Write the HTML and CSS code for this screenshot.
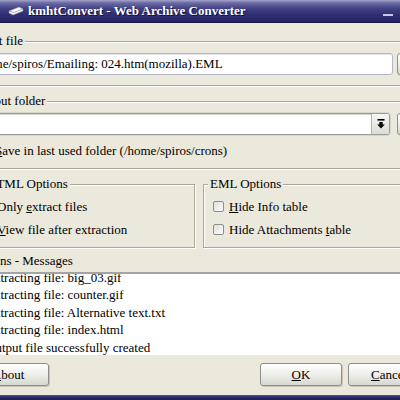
FILE: index.html
```
<!DOCTYPE html>
<html>
<head>
<meta charset="utf-8">
<title>kmhtConvert</title>
<link rel="stylesheet" href="styles.css">
</head>
<body>
<div class="window">
  <div class="titlebar">
    <svg class="app-icon" width="16" height="12" viewBox="0 0 16 12">
      <path d="M1 6 L11 2 L15 4 L15 6 L5 10 L1 8 Z" fill="#ffffff" stroke="#8a8aa8" stroke-width="0.6"/>
      <path d="M1 6 L6 7.5 L15 4" fill="none" stroke="#9a9ab4" stroke-width="0.8"/>
    </svg>
    <span class="title">kmhtConvert - Web Archive Converter</span>
    <span class="minimize"></span>
  </div>

  <div class="client">
    <fieldset class="group group-input">
      <legend class="legend legend-input">Input file</legend>
      <div class="field-row row-input">
        <div class="textfield">/home/spiros/Emailing: 024.htm(mozilla).EML</div>
        <div class="btn btn-browse"></div>
      </div>
    </fieldset>

    <fieldset class="group group-output">
      <legend class="legend legend-output">Output folder</legend>
      <div class="field-row row-output">
        <div class="combo">
          <div class="combo-edit"></div>
          <div class="combo-arrow">
            <svg width="8" height="10" viewBox="0 0 8 10">
              <rect x="0.5" y="0" width="7" height="1.6" fill="#000"/>
              <path d="M2.3 3 H5.7 V5.4 H7.8 L4 9.6 L0.2 5.4 H2.3 Z" fill="#000"/>
            </svg>
          </div>
        </div>
        <div class="btn btn-browse"></div>
      </div>
      <div class="check-row save-row">
        <span class="checkbox"></span>
        <span class="check-label"><u>S</u>ave in last used folder (/home/spiros/crons)</span>
      </div>
    </fieldset>

    <div class="options">
      <fieldset class="group group-html">
        <legend class="legend legend-html">HTML Options</legend>
        <div class="check-row opt-row">
          <span class="checkbox"></span>
          <span class="check-label">Only <u>e</u>xtract files</span>
        </div>
        <div class="check-row opt-row">
          <span class="checkbox"></span>
          <span class="check-label"><u>V</u>iew file after extraction</span>
        </div>
      </fieldset>
      <fieldset class="group group-eml">
        <legend class="legend legend-eml">EML Options</legend>
        <div class="check-row opt-row">
          <span class="checkbox"></span>
          <span class="check-label"><u>H</u>ide Info table</span>
        </div>
        <div class="check-row opt-row">
          <span class="checkbox"></span>
          <span class="check-label">Hide Attachments <u>t</u>able</span>
        </div>
      </fieldset>
    </div>

    <div class="msg-label">Actions - Messages</div>

    <div class="msg-list">
      <div class="msg-items">
        <div class="msg">Extracting file: big_03.gif</div>
        <div class="msg">Extracting file: counter.gif</div>
        <div class="msg">Extracting file: Alternative text.txt</div>
        <div class="msg">Extracting file: index.html</div>
        <div class="msg">Output file successfully created</div>
      </div>
    </div>

    <div class="button-row">
      <div class="btn btn-text btn-about"><u>A</u>bout</div>
      <div class="spacer"></div>
      <div class="btn btn-text"><u>O</u>K</div>
      <div class="btn btn-text"><u>C</u>ancel</div>
    </div>
  </div>

  <div class="bottom-frame"></div>
</div>
</body>
</html>
```

FILE: styles.css
```
html, body {
  margin: 0;
  padding: 0;
}

body {
  width: 400px;
  height: 400px;
  overflow: hidden;
  background: #ebe8dc;
  font-family: "Liberation Serif", "Times New Roman", serif;
  font-size: 13px;
  color: #000;
}

.window {
  display: flex;
  flex-direction: column;
  height: 400px;
}

/* ---------- title bar ---------- */
.titlebar {
  flex: none;
  height: 23px;
  display: flex;
  align-items: center;
  background: linear-gradient(#a4a4cc 0px, #6a6aa4 3px, #3e3e82 9px, #2c2c6e 16px, #222262 23px);
  color: #fff;
  box-sizing: border-box;
  border-bottom: 1px solid #16164a;
}

.app-icon {
  margin-left: 8px;
  flex: none;
}

.title {
  margin-left: 4px;
  font-weight: bold;
  font-size: 13px;
  text-shadow: 1px 1px 0 #10103a;
}

.minimize {
  margin-left: auto;
  margin-right: 7px;
  margin-top: 8px;
  width: 10px;
  height: 2px;
  background: #c8c8e0;
}

/* ---------- client area ---------- */
.client {
  flex: 1;
  display: flex;
  flex-direction: column;
  width: 560px;
  margin-left: -60px;
  box-sizing: border-box;
  padding: 0 10px;
}

.group {
  margin: 0;
  min-width: 0;
  border: 1px solid #aca899;
  box-shadow: inset 1px 1px 0 #fff, 1px 1px 0 #fff;
}

.legend {
  line-height: 16px;
  padding: 0 2px;
  background: #ebe8dc;
}

.group-input {
  margin-top: 10px;
  padding: 4px 9px 10px 8px;
}

.legend-input {
  margin-left: 14px;
}

.group-output {
  margin-top: 7px;
  padding: 4px 9px 7px 8px;
}

.legend-output {
  margin-left: 14px;
}

.field-row {
  display: flex;
  height: 22px;
}

.row-input {
  gap: 4px;
}

.row-output {
  gap: 7px;
}

.textfield {
  flex: 1;
  box-sizing: border-box;
  background: #fff;
  border: 1px solid #b4b4c8;
  border-radius: 3px;
  box-shadow: inset 1px 1px 0 #e4e4ee;
  padding-left: 16px;
  line-height: 20px;
  white-space: nowrap;
}

.combo {
  flex: 1;
  display: flex;
  box-sizing: border-box;
  border: 1px solid #9c9c9c;
  border-radius: 3px;
  background: #fff;
  box-shadow: 0 0 0 1px #d8d5c9;
  overflow: hidden;
}

.combo-edit {
  flex: 1;
  background: #fff;
  box-shadow: inset 1px 1px 0 #d4d4d4;
}

.combo-arrow {
  width: 17px;
  display: flex;
  align-items: center;
  justify-content: center;
  border-left: 1px solid #b4b4b4;
  background: linear-gradient(#f6f6f4, #dcdcd6);
}

.btn {
  box-sizing: border-box;
  border: 1px solid #8e8e8a;
  border-radius: 3px;
  background: linear-gradient(#ffffff, #f0f0ec 45%, #d8d8d2);
  box-shadow: 1px 1px 0 #c8c5b8;
}

.btn-browse {
  width: 83px;
  flex: none;
}

/* ---------- checkboxes ---------- */
.check-row {
  display: flex;
  align-items: center;
  gap: 5px;
  white-space: nowrap;
}

.checkbox {
  flex: none;
  width: 11px;
  height: 11px;
  box-sizing: border-box;
  border: 1px solid #8e8f8f;
  border-radius: 2px;
  background: linear-gradient(135deg, #dcdcd8, #ffffff);
}

.save-row {
  margin-top: 6px;
  height: 20px;
  padding-left: 20px;
}

.options {
  display: flex;
  gap: 8px;
  margin-top: 7px;
  padding-left: 27px;
}

.group-html {
  width: 218px;
  box-sizing: border-box;
  padding: 3px 0 6px 3px;
}

.legend-html {
  margin-left: 4px;
}

.group-eml {
  width: 240px;
  box-sizing: border-box;
  padding: 3px 0 6px 9px;
}

.legend-eml {
  margin-left: -5px;
}

.opt-row {
  height: 23px;
}

/* ---------- messages ---------- */
.msg-label {
  margin-top: 4px;
  line-height: 17px;
  padding-left: 21px;
}

.msg-list {
  margin-top: 3px;
  height: 85px;
  box-sizing: border-box;
  background: #fff;
  border-top: 2px solid #a4a4a4;
  border-left: 2px solid #a4a4a4;
  border-bottom: 2px solid #ebe8dc;
  overflow: hidden;
}

.msg-items {
  margin-top: -5.5px;
  padding-left: 34px;
}

.msg {
  line-height: 17.5px;
  white-space: nowrap;
}

/* ---------- buttons ---------- */
.button-row {
  display: flex;
  gap: 6px;
  margin-top: 6px;
  padding-left: 17px;
}

.btn-text {
  width: 82px;
  height: 23px;
  line-height: 21px;
  text-align: center;
  flex: none;
}

.spacer {
  width: 199px;
  flex: none;
}

/* ---------- bottom window frame ---------- */
.bottom-frame {
  flex: none;
  height: 5px;
  background: linear-gradient(#5a5a98, #2a2a6c 40%, #1e1e5c);
}
```
